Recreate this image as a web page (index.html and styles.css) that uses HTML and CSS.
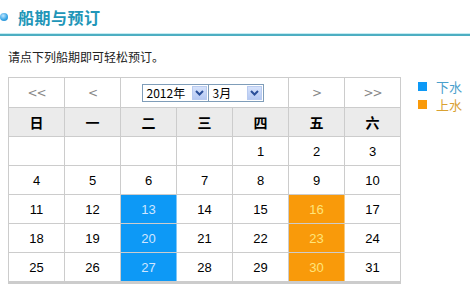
FILE: index.html
```html
<!DOCTYPE html>
<html>
<head>
<meta charset="utf-8">
<link rel="stylesheet" href="styles.css">
</head>
<body>
<div class="header">
  <span class="bullet"></span>
  <h1 class="title">船期与预订</h1>
</div>
<div class="rule"></div>
<p class="intro">请点下列船期即可轻松预订。</p>
<div class="main">
  <table class="cal">
    <colgroup>
      <col class="c"><col class="c"><col class="c"><col class="c"><col class="c"><col class="c"><col class="c">
    </colgroup>
    <tr class="nav">
      <td>&lt;&lt;</td>
      <td>&lt;</td>
      <td colspan="3">
        <div class="pickers">
          <span class="sel sel-year"><span class="val">2012年</span><span class="btn"><svg width="9" height="6" viewBox="0 0 9 6"><path d="M1 1 L4.5 4.5 L8 1" fill="none" stroke="#2a4f9a" stroke-width="2"/></svg></span></span><span class="sel sel-month"><span class="val">3月</span><span class="btn"><svg width="9" height="6" viewBox="0 0 9 6"><path d="M1 1 L4.5 4.5 L8 1" fill="none" stroke="#2a4f9a" stroke-width="2"/></svg></span></span>
        </div>
      </td>
      <td>&gt;</td>
      <td>&gt;&gt;</td>
    </tr>
    <tr class="week">
      <th>日</th><th>一</th><th>二</th><th>三</th><th>四</th><th>五</th><th>六</th>
    </tr>
    <tr><td></td><td></td><td></td><td></td><td>1</td><td>2</td><td>3</td></tr>
    <tr><td>4</td><td>5</td><td>6</td><td>7</td><td>8</td><td>9</td><td>10</td></tr>
    <tr><td>11</td><td>12</td><td class="down">13</td><td>14</td><td>15</td><td class="up">16</td><td>17</td></tr>
    <tr><td>18</td><td>19</td><td class="down">20</td><td>21</td><td>22</td><td class="up">23</td><td>24</td></tr>
    <tr class="last"><td>25</td><td>26</td><td class="down">27</td><td>28</td><td>29</td><td class="up">30</td><td>31</td></tr>
  </table>
  <ul class="legend">
    <li class="lg-down"><span class="sq"></span>下水</li>
    <li class="lg-up"><span class="sq"></span>上水</li>
  </ul>
</div>
</body>
</html>
```
FILE: styles.css
```css
html, body {
  margin: 0;
  padding: 0;
  background: #fff;
}
body {
  font-family: "Liberation Sans", "Noto Sans CJK SC", sans-serif;
  font-size: 12px;
  color: #000;
}
.header {
  height: 33px;
  display: flex;
  align-items: center;
}
.bullet {
  width: 8px;
  height: 8px;
  border-radius: 50%;
  margin-top: 1px;
  background: radial-gradient(circle at 40% 35%, #bfe6ff 0%, #3aa6e6 55%, #1a7fc4 100%);
}
.title {
  margin: 0 0 0 10px;
  font-family: "Noto Sans CJK SC", sans-serif;
  font-size: 16px;
  font-weight: bold;
  color: #2196b8;
  letter-spacing: 0.5px;
  line-height: 20px;
}
.rule {
  height: 0;
  border-top: 1px solid #c4ecf2;
  border-bottom: 2px solid #4daec2;
}
.intro {
  margin: 13px 0 0 8px;
  font-family: "Noto Sans CJK SC", sans-serif;
  font-size: 12px;
  line-height: 16px;
  color: #222;
}
.main {
  display: flex;
  align-items: flex-start;
  margin: 12px 0 0 8px;
}
.cal {
  border-collapse: collapse;
  table-layout: fixed;
  width: 393px;
  flex-shrink: 0;
  border-bottom: 3px solid #cccccc;
}
.cal col.c {
  width: 56px;
}
.cal td, .cal th {
  height: 28px;
  padding: 0;
  border: 1px solid #cccccc;
  text-align: center;
  vertical-align: middle;
  font-size: 13px;
  font-family: "Liberation Sans", sans-serif;
  white-space: nowrap;
}
.nav td {
  height: 29px;
  color: #888;
  font-size: 12px;
  font-family: "DejaVu Sans", sans-serif;
  letter-spacing: -1px;
}
.week th {
  background: #ebebeb;
  font-family: "Noto Sans CJK SC", sans-serif;
  font-weight: bold;
  font-size: 14px;
}
.cal td.down {
  background: #0d99f6;
  color: #cfe6ff;
  border-left-color: #7fc7f7;
  border-right-color: #7fc7f7;
  border-top-color: #8fd0fb;
}
.cal td.up {
  background: #f99a0a;
  color: #ffe57a;
  border-left-color: #f7c87a;
  border-right-color: #f7c87a;
  border-top-color: #fbc27a;
}
.pickers {
  display: flex;
  justify-content: center;
  padding-right: 4px;
  letter-spacing: 0;
}
.sel {
  display: flex;
  flex-shrink: 0;
  align-items: center;
  justify-content: space-between;
  box-sizing: border-box;
  height: 18px;
  border: 1px solid #7f9db9;
  background: #fff;
  color: #000;
  font-family: "Noto Sans CJK SC", sans-serif;
  font-size: 12px;
  padding: 1px 1px 1px 4px;
}
.sel-year {
  width: 67px;
}
.sel-month {
  width: 55px;
  border-left: none;
}
.val {
  line-height: 15px;
  white-space: nowrap;
}
.btn {
  width: 15px;
  height: 14px;
  background: linear-gradient(#d6e2fb, #b5c9f3);
  border: 1px solid #b9cbf0;
  box-sizing: border-box;
  display: flex;
  align-items: center;
  justify-content: center;
}
.legend {
  list-style: none;
  margin: 0 0 0 17px;
  padding: 0;
  font-family: "Noto Sans CJK SC", sans-serif;
  font-size: 13px;
}
.legend li {
  display: flex;
  align-items: center;
  height: 18px;
}
.sq {
  width: 9px;
  height: 9px;
  margin-right: 9px;
}
.lg-down { color: #4aa0cc; }
.lg-down .sq { background: #0d99f6; }
.lg-up { color: #d9a132; }
.lg-up .sq { background: #f99a0a; }
```
